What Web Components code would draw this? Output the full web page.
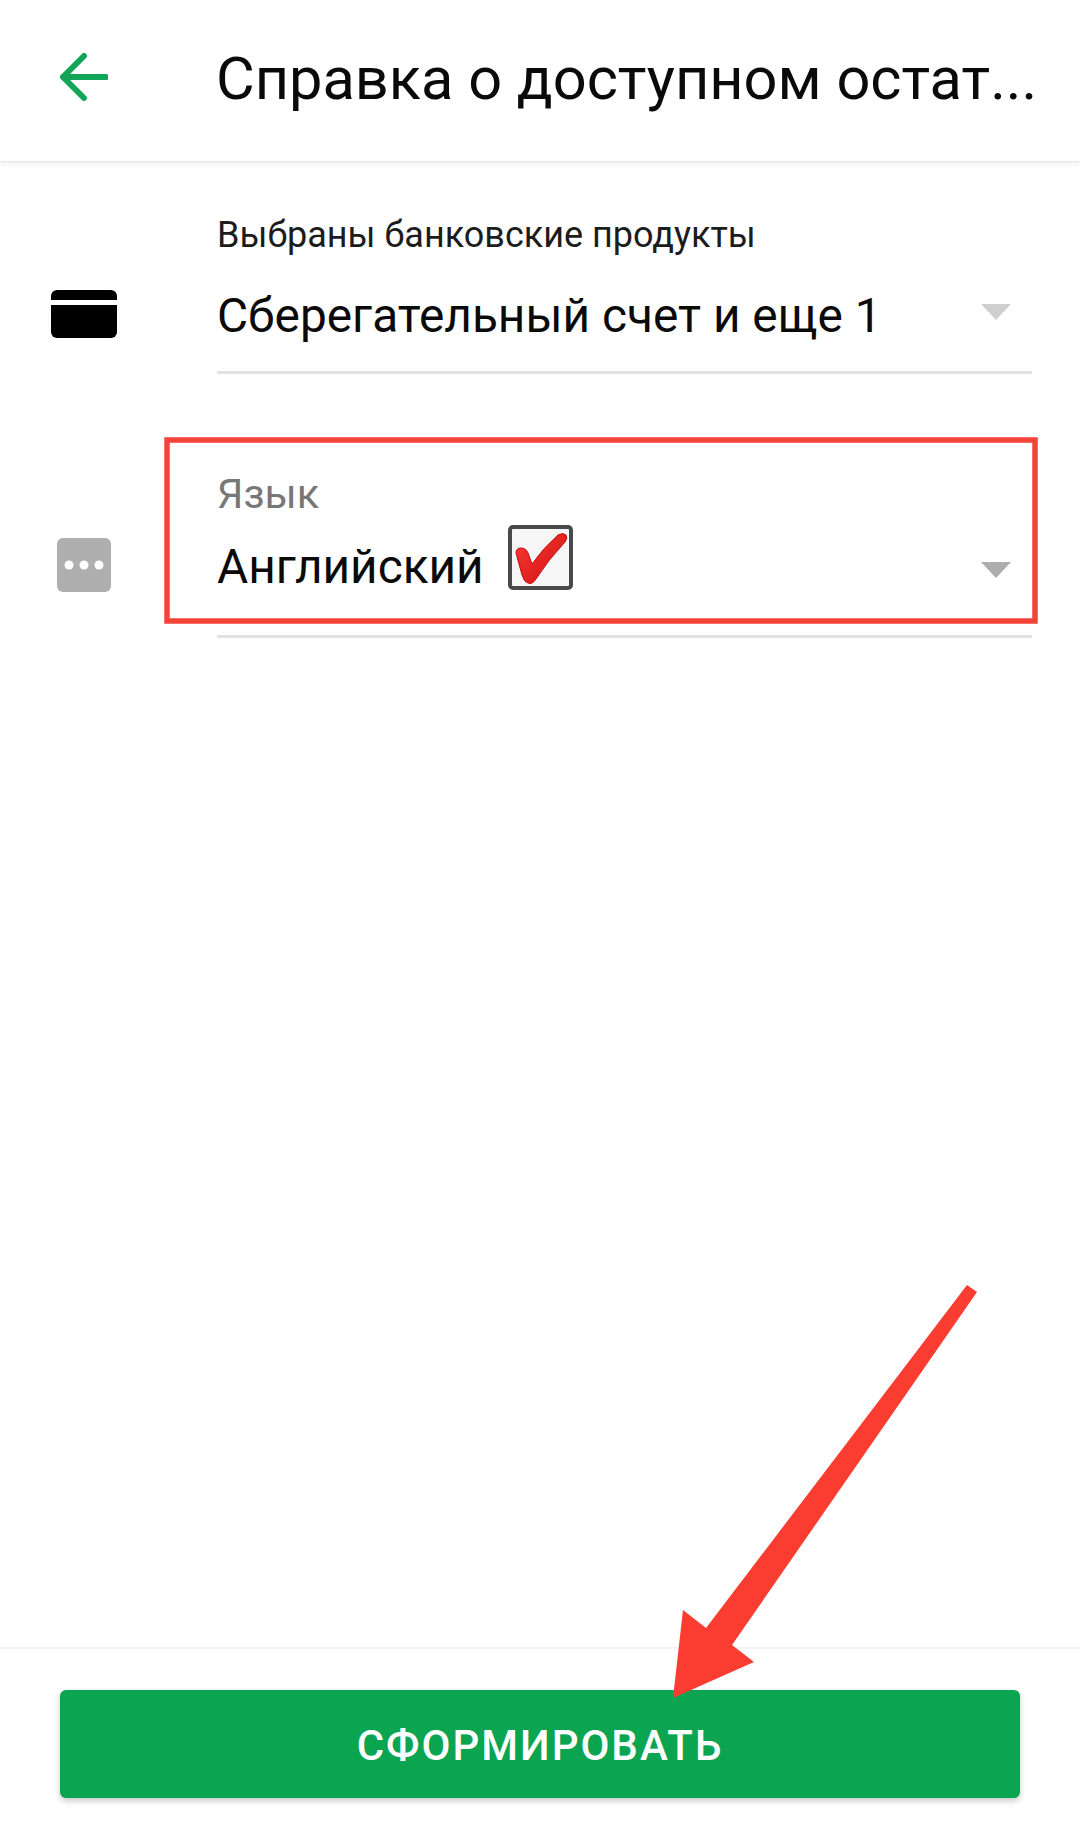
<!DOCTYPE html>
<html lang="ru">
<head>
<meta charset="utf-8">
<title>Справка о доступном остатке</title>
<style>
  html, body { margin: 0; padding: 0; background: #fff; }
  body { width: 1080px; height: 1840px; overflow: hidden; font-family: Roboto, "Liberation Sans", sans-serif; color: #0a0a0a; }
</style>
</head>
<body>
<statement-page>
  <app-bar slot="top">Справка о доступном остат...</app-bar>

  <field-row style="--row-top:54px;--label-size:36px;--label-line:40px;--label-gap:33px;--label-color:#1c1c1c;--caret-color:#cfcfcf;--caret-top:16px;--rule-gap:27px">
    <card-icon slot="icon"></card-icon>
    <span slot="label">Выбраны банковские продукты</span>
    <span slot="value">Сберегательный счет и еще 1</span>
  </field-row>

  <field-row style="--row-top:96px;--label-size:41.5px;--label-line:48px;--label-gap:21px;--label-color:#777;--caret-color:#adadad;--caret-top:23px;--rule-gap:40px">
    <more-icon slot="icon"></more-icon>
    <span slot="label">Язык</span>
    <span slot="value">Английский</span>
    <check-mark slot="value"></check-mark>
  </field-row>

  <action-footer slot="bottom">СФОРМИРОВАТЬ</action-footer>
  <note-marks slot="over"></note-marks>
</statement-page>

<script>
class StatementPage extends HTMLElement {
  constructor() {
    super();
    this.attachShadow({ mode: "open" });
    this.shadowRoot.innerHTML = `
      <style>
        :host { display: flex; flex-direction: column; position: relative; height: 1840px; }
        #main { flex: 1; }
      </style>
      <slot name="top"></slot>
      <div id="main"><slot></slot></div>
      <slot name="bottom"></slot>
      <slot name="over"></slot>
    `;
  }
}

class AppBar extends HTMLElement {
  constructor() {
    super();
    this.attachShadow({ mode: "open" });
    this.shadowRoot.innerHTML = `
      <style>
        :host { display: flex; align-items: center; height: 161px; background: #fff; position: relative;
                box-shadow: 0 1px 0 #e6e6e6, 0 3px 6px rgba(0, 0, 0, 0.07); }
        svg { flex: none; width: 48px; height: 48px; margin-left: 60px; margin-right: 108px; margin-top: -8px; }
        #title { font-size: 59.5px; line-height: 66px; color: #0a0a0a; white-space: nowrap; margin-top: -4px; }
      </style>
      <svg viewBox="0 0 48 48" fill="none" stroke="#12a557" stroke-width="6" stroke-linecap="round" stroke-linejoin="round">
        <path d="M3 24H46M24 3L3 24L24 45"/>
      </svg>
      <div id="title"><slot></slot></div>
    `;
  }
}

class FieldRow extends HTMLElement {
  constructor() {
    super();
    this.attachShadow({ mode: "open" });
    this.shadowRoot.innerHTML = `
      <style>
        :host { display: grid; grid-template-columns: 217px 815px; margin-top: var(--row-top); }
        #label { font-size: var(--label-size); line-height: var(--label-line); color: var(--label-color);
                 margin-bottom: var(--label-gap); }
        #value { display: flex; height: 56px; font-size: 47.8px; line-height: 56px; color: #0a0a0a;
                 padding-bottom: var(--rule-gap); border-bottom: 3px solid #e2e2e2; }
        #text { flex: 1; display: flex; }
        svg { flex: none; width: 30px; height: 16px; margin-top: var(--caret-top); margin-right: 21px; }
      </style>
      <div><slot name="icon"></slot></div>
      <div>
        <div id="label"><slot name="label"></slot></div>
        <div id="value">
          <div id="text"><slot name="value"></slot></div>
          <svg viewBox="0 0 30 16"><path d="M0 0H30L15 16Z" style="fill:var(--caret-color)"/></svg>
        </div>
      </div>
    `;
  }
}

class CardIcon extends HTMLElement {
  constructor() {
    super();
    this.attachShadow({ mode: "open" });
    this.shadowRoot.innerHTML = `
      <style>
        :host { display: block; width: 66px; height: 48px; margin: 75px 0 0 51px; }
        svg { display: block; }
      </style>
      <svg width="66" height="48" viewBox="0 0 66 48">
        <path d="M6 0H60a6 6 0 0 1 6 6V10H0V6a6 6 0 0 1 6-6Z" fill="#000"/>
        <path d="M0 15H66V42a6 6 0 0 1-6 6H6a6 6 0 0 1-6-6Z" fill="#000"/>
      </svg>
    `;
  }
}

class MoreIcon extends HTMLElement {
  constructor() {
    super();
    this.attachShadow({ mode: "open" });
    this.shadowRoot.innerHTML = `
      <style>
        :host { display: block; width: 54px; height: 54px; margin: 68px 0 0 57px; }
        svg { display: block; }
      </style>
      <svg width="54" height="54" viewBox="0 0 54 54">
        <rect width="54" height="54" rx="6" fill="#aeaeae"/>
        <circle cx="12" cy="27" r="4.5" fill="#fff"/>
        <circle cx="27" cy="27" r="4.5" fill="#fff"/>
        <circle cx="42" cy="27" r="4.5" fill="#fff"/>
      </svg>
    `;
  }
}

class CheckMark extends HTMLElement {
  constructor() {
    super();
    this.attachShadow({ mode: "open" });
    this.shadowRoot.innerHTML = `
      <style>
        :host { display: block; flex: none; width: 65px; height: 65px; margin: -14px 0 0 24px; }
        svg { display: block; }
      </style>
      <svg width="65" height="65" viewBox="0 0 65 65">
        <defs>
          <linearGradient id="red" x1="0" y1="0" x2="1" y2="1">
            <stop offset="0" stop-color="#fa3a34"/>
            <stop offset="1" stop-color="#d01010"/>
          </linearGradient>
        </defs>
        <rect x="2" y="2" width="61" height="61" rx="3" fill="#f6f6f6" stroke="#474a4c" stroke-width="4"/>
        <path d="M8 28Q8 23 13 23Q18 23 20 28L24 39Q36 22 50 10Q55 7 58 10Q60 13 57 17Q40 35 28 54Q24 60 20 58Q16 57 14 50Z" fill="url(#red)" stroke="#c00d0d" stroke-width="1"/>
      </svg>
    `;
  }
}

class ActionFooter extends HTMLElement {
  constructor() {
    super();
    this.attachShadow({ mode: "open" });
    this.shadowRoot.innerHTML = `
      <style>
        :host { display: block; border-top: 2px solid #f4f4f4; padding: 41px 60px 42px; }
        button { display: block; width: 100%; height: 108px; padding: 2px 0 0; border: 0; border-radius: 6px;
                 background: #0ba551; color: #fff; font: 500 42px Roboto, "Liberation Sans", sans-serif;
                 letter-spacing: 2px; box-shadow: 0 3px 6px rgba(0, 0, 0, 0.22); }
      </style>
      <button><slot></slot></button>
    `;
  }
}

// red marks drawn on top of the screenshot
class NoteMarks extends HTMLElement {
  constructor() {
    super();
    this.attachShadow({ mode: "open" });
    this.shadowRoot.innerHTML = `
      <style>
        :host { display: block; position: absolute; left: 0; top: 0; width: 1080px; height: 1840px; pointer-events: none; }
        svg { display: block; }
      </style>
      <svg width="1080" height="1840" viewBox="0 0 1080 1840">
        <rect x="167" y="440" width="868" height="181" fill="none" stroke="#f44338" stroke-width="5.5"/>
        <polygon points="967,1285 977,1292 732,1645 754,1662 673,1698 683,1610 706,1628" fill="#fb3c30"/>
      </svg>
    `;
  }
}

customElements.define("statement-page", StatementPage);
customElements.define("app-bar", AppBar);
customElements.define("field-row", FieldRow);
customElements.define("card-icon", CardIcon);
customElements.define("more-icon", MoreIcon);
customElements.define("check-mark", CheckMark);
customElements.define("action-footer", ActionFooter);
customElements.define("note-marks", NoteMarks);
</script>
</body>
</html>
